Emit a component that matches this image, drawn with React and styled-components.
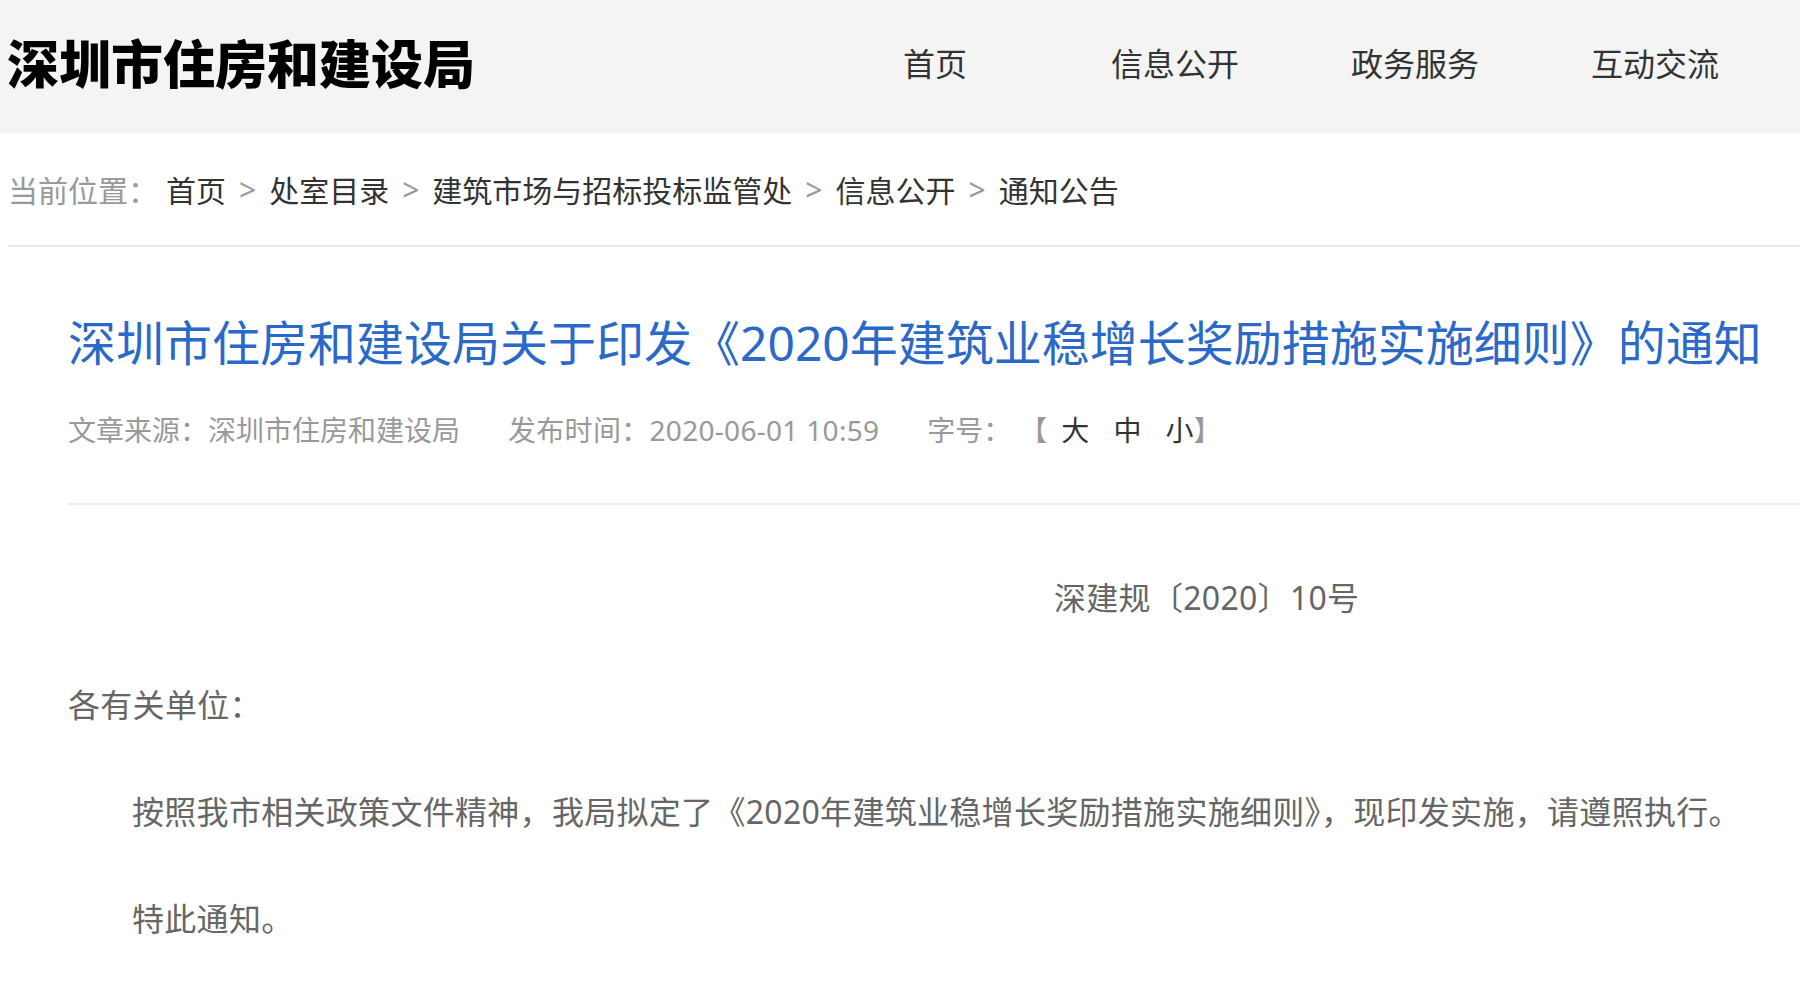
import React from "react";
import styled, { createGlobalStyle } from "styled-components";

const GlobalStyle = createGlobalStyle`
  body {
    margin: 0;
    background: #fff;
    font-family: "Noto Sans", "Noto Sans CJK SC", sans-serif;
  }
  p, h1 {
    margin: 0;
  }
`;

const navItems = ["首页", "信息公开", "政务服务", "互动交流"];
const crumbs = ["首页", "处室目录", "建筑市场与招标投标监管处", "信息公开", "通知公告"];

export default function App() {
  return (
    <Page>
      <GlobalStyle />
      <Header>
        <Logo>深圳市住房和建设局</Logo>
        <Nav>
          {navItems.map((item) => (
            <NavItem key={item}>{item}</NavItem>
          ))}
        </Nav>
      </Header>

      <Breadcrumb>
        <CrumbLabel>当前位置：</CrumbLabel>
        {crumbs.map((c, i) => (
          <React.Fragment key={c}>
            {i > 0 && <CrumbSep>&gt;</CrumbSep>}
            <Crumb>{c}</Crumb>
          </React.Fragment>
        ))}
      </Breadcrumb>

      <Article>
        <Title>深圳市住房和建设局关于印发《2020年建筑业稳增长奖励措施实施细则》的通知</Title>
        <Meta>
          <MetaItem>文章来源：深圳市住房和建设局</MetaItem>
          <MetaItem $wide>发布时间：2020-06-01 10:59</MetaItem>
          <MetaItem>
            字号：
            <SizeGroup>
              【<SizeOption $first>大</SizeOption>
              <SizeOption>中</SizeOption>
              <SizeOption>小</SizeOption>】
            </SizeGroup>
          </MetaItem>
        </Meta>

        <Body>
          <Para $offset={986}>深建规〔2020〕10号</Para>
          <Para>各有关单位：</Para>
          <Para $indent>
            按照我市相关政策文件精神，我局拟定了《2020年建筑业稳增长奖励措施实施细则》，现印发实施，请遵照执行。
          </Para>
          <Para $indent>特此通知。</Para>
        </Body>
      </Article>
    </Page>
  );
}

const Page = styled.div`
  width: 1800px;
  min-height: 992px;
  overflow: hidden;
`;

const Header = styled.header`
  height: 133px;
  box-sizing: border-box;
  background: #f4f4f4;
  display: flex;
  align-items: center;
  justify-content: space-between;
  padding: 0 25px 6px 7px;
`;

const Logo = styled.div`
  font-size: 52px;
  font-weight: 900;
  color: #000;
  line-height: 1;
`;

const Nav = styled.nav`
  display: flex;
`;

const NavItem = styled.a`
  width: 240px;
  text-align: center;
  font-size: 32px;
  color: #333;
  line-height: 1;
`;

const Breadcrumb = styled.div`
  height: 112px;
  margin-left: 8px;
  display: flex;
  align-items: center;
  border-bottom: 2px solid #e6e6e6;
  font-size: 30px;
  color: #333;
`;

const CrumbLabel = styled.span`
  color: #999;
  margin-right: 8px;
`;

const Crumb = styled.a`
  color: #333;
`;

const CrumbSep = styled.span`
  color: #999;
  margin: 0 13px;
`;

const Article = styled.main`
  padding-left: 68px;
`;

const Title = styled.h1`
  margin-top: 61px;
  font-size: 48px;
  font-weight: 400;
  line-height: 69px;
  color: #2a69c8;
  white-space: nowrap;
`;

const Meta = styled.div`
  margin-top: 33px;
  padding-bottom: 53px;
  border-bottom: 2px solid #eeeeee;
  display: flex;
  gap: 48px;
  font-size: 28px;
  line-height: 40px;
  color: #999;
`;

const MetaItem = styled.span`
  white-space: nowrap;
  letter-spacing: ${(p) => (p.$wide ? "0.3px" : "0")};
`;

const SizeGroup = styled.span`
  margin-left: 22px;
`;

const SizeOption = styled.a`
  color: #333;
  margin-left: ${(p) => (p.$first ? "14px" : "24px")};
`;

const Body = styled.div`
  padding-top: 65px;
  display: flex;
  flex-direction: column;
  gap: 51px;
  font-size: 32px;
  line-height: 56px;
  letter-spacing: 0.3px;
  color: #666;
`;

const Para = styled.p`
  padding-left: ${(p) => p.$offset || 0}px;
  text-indent: ${(p) => (p.$indent ? "2em" : "0")};
`;
